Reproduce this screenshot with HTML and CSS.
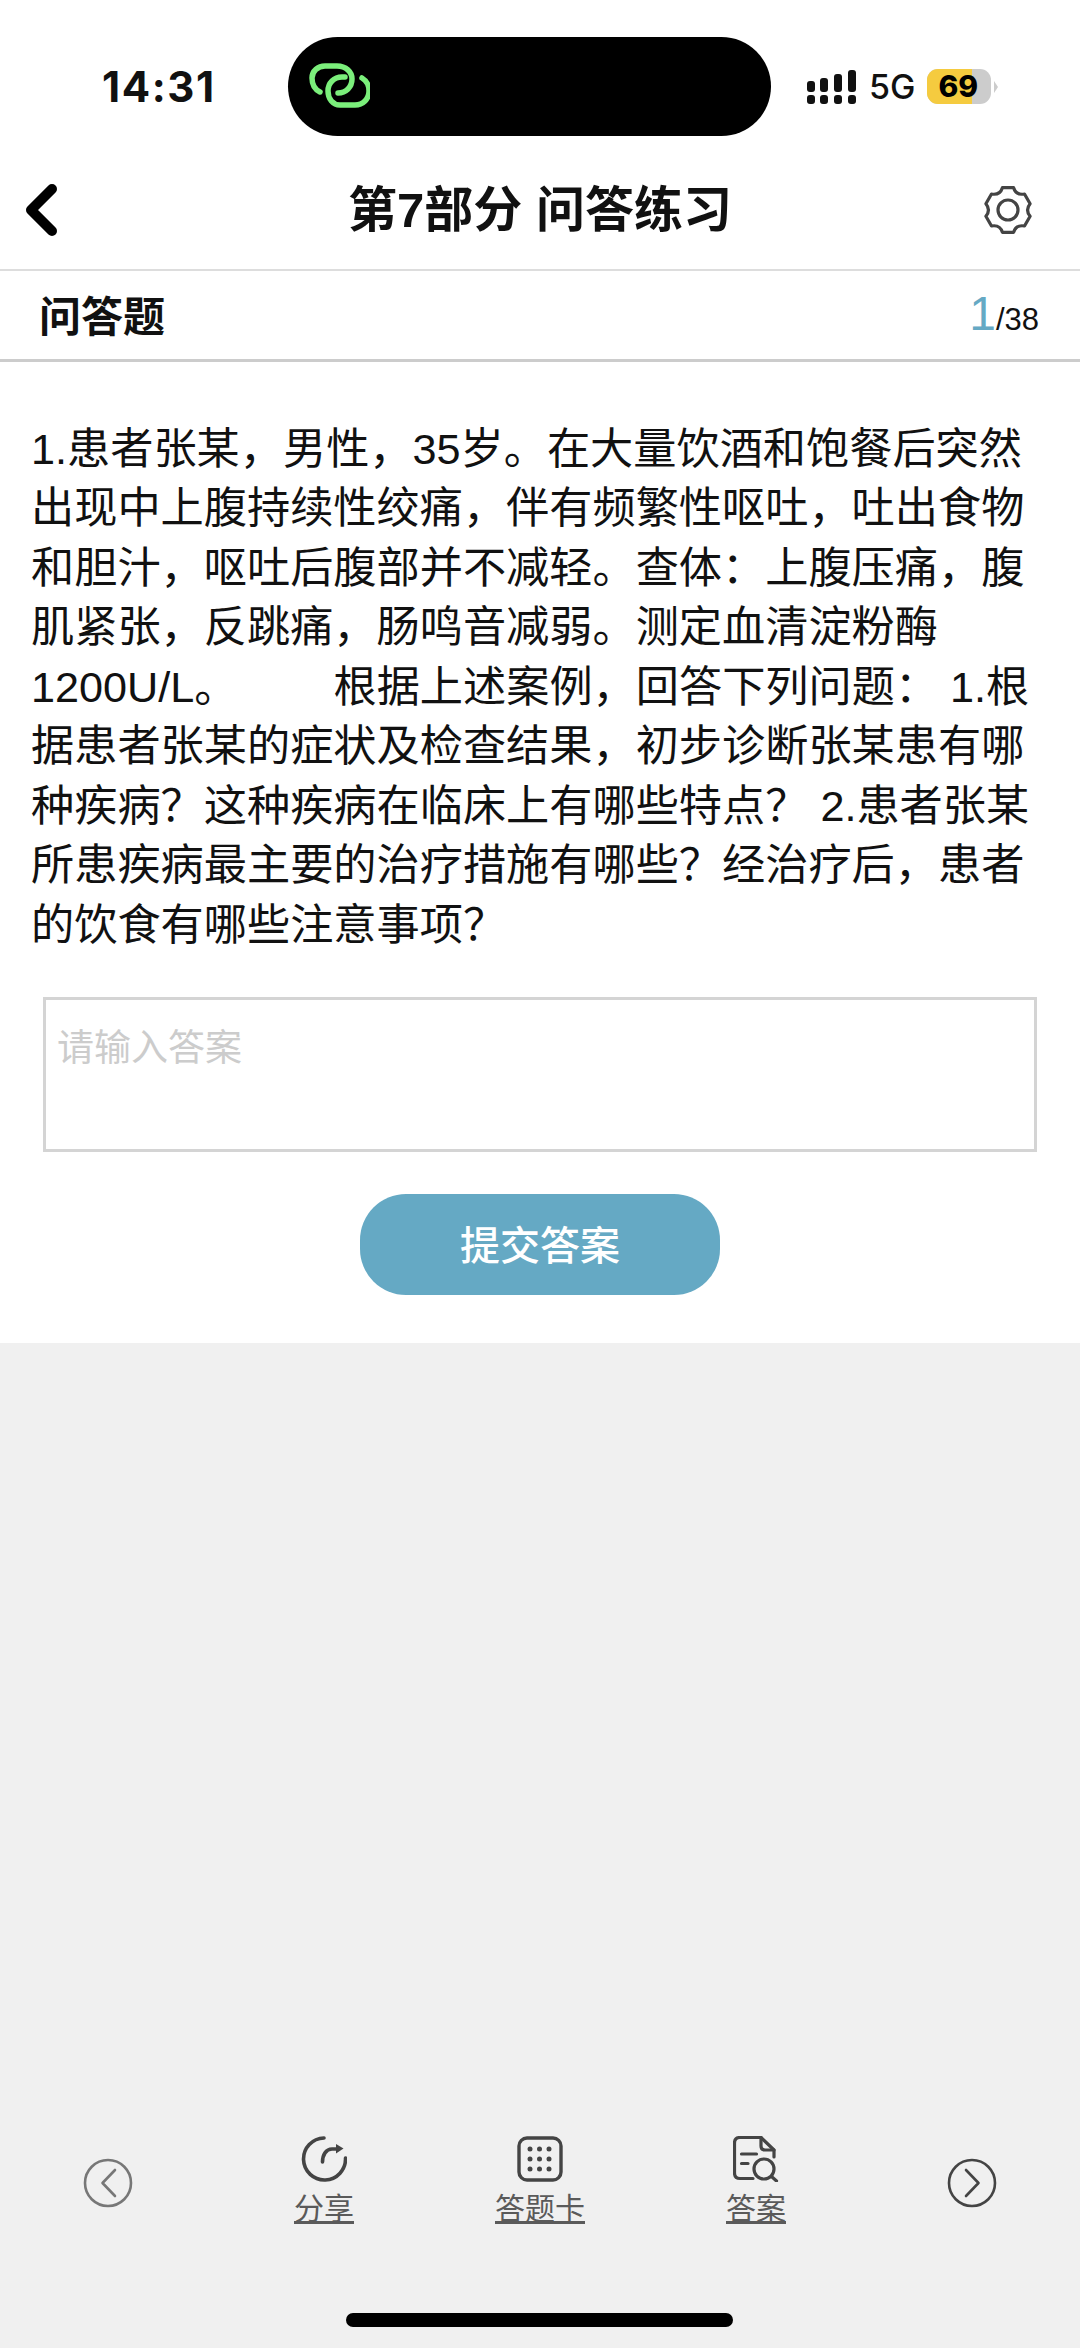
FILE: index.html
```html
<!DOCTYPE html>
<html lang="zh-CN">
<head>
    <meta charset="UTF-8">
    <title>第7部分 问答练习</title>
    <link rel="stylesheet" href="styles.css">
</head>
<body>
    <div class="page">
        <div class="status-bar">
            <div class="time">14:31</div>
            <div class="island">
                <svg class="island-icon" width="80" height="65" viewBox="0 0 80 65" fill="none" stroke="#7bef7b" stroke-width="5.5" stroke-linecap="round">
                    <path d="M30 38C24 35 22 29 22 24C22 17 28 12 35 12H47C56 12 62 18 62 25C62 33 56 39 48 39"/>
                    <path d="M72 24C77 27 79 32 79 37C79 45 73 51 65 51H50C43 51 38 45 38 37C38 29 44 23 52 23H55"/>
                </svg>
            </div>
            <svg class="signal" width="49" height="34" viewBox="0 0 49 34" fill="#111">
                <rect x="0" y="11" width="8" height="11" rx="3"/>
                <rect x="13" y="8" width="8" height="14" rx="3"/>
                <rect x="27" y="4" width="8" height="18" rx="3"/>
                <rect x="41" y="0" width="8" height="22" rx="3"/>
                <rect x="0" y="25" width="8" height="9" rx="3"/>
                <rect x="13" y="25" width="8" height="9" rx="3"/>
                <rect x="27" y="25" width="8" height="9" rx="3"/>
                <rect x="41" y="25" width="8" height="9" rx="3"/>
            </svg>
            <div class="network">5G</div>
            <div class="battery">
                <div class="battery-level">69</div>
            </div>
            <div class="battery-tip"></div>
        </div>

        <div class="nav">
            <svg class="nav-back" width="42" height="62" viewBox="0 0 42 62" fill="none" stroke="#000" stroke-width="10" stroke-linecap="round" stroke-linejoin="round">
                <path d="M31 10L10 31L31 52"/>
            </svg>
            <div class="nav-title">第7部分 问答练习</div>
            <svg class="nav-gear" width="54" height="54" viewBox="-27 -27 54 54" fill="none" stroke="#444" stroke-width="3.2" stroke-linejoin="round">
                <path d="M-5.6 -22.3L5.6 -22.3Q8 -14.5 16.5 -16L22.1 -6.3Q17 0 22.1 6.3L16.5 16Q8 14.5 5.6 22.3L-5.6 22.3Q-8 14.5 -16.5 16L-22.1 6.3Q-17 0 -22.1 -6.3L-16.5 -16Q-8 -14.5 -5.6 -22.3Z"/>
                <circle r="10"/>
            </svg>
        </div>

        <div class="sub-bar">
            <div class="sub-title">问答题</div>
            <div class="counter"><span class="counter-now">1</span>/38</div>
        </div>

        <div class="content">
            <p class="question">1.患者张某，男性，35岁。在大量饮酒和饱餐后突然出现中上腹持续性绞痛，伴有频繁性呕吐，吐出食物和胆汁，呕吐后腹部并不减轻。查体：上腹压痛，腹肌紧张，反跳痛，肠鸣音减弱。测定血清淀粉酶1200U/L。        根据上述案例，回答下列问题： 1.根据患者张某的症状及检查结果，初步诊断张某患有哪种疾病？这种疾病在临床上有哪些特点？ 2.患者张某所患疾病最主要的治疗措施有哪些？经治疗后，患者的饮食有哪些注意事项？</p>
            <textarea class="answer" placeholder="请输入答案"></textarea>
            <button class="submit">提交答案</button>
        </div>

        <div class="footer">
            <div class="toolbar">
                <div class="tool tool-arrow">
                    <svg width="50" height="50" viewBox="0 0 50 50" fill="none" stroke="#777" stroke-width="2.6" stroke-linecap="round" stroke-linejoin="round">
                        <circle cx="25" cy="25" r="23"/>
                        <path d="M32 12L19.5 25L32 38"/>
                    </svg>
                </div>
                <div class="tool">
                    <svg width="46" height="46" viewBox="0 0 46 46" fill="none" stroke="#444" stroke-width="3.6" stroke-linecap="round">
                        <path d="M23 2A21 21 0 1 0 44.5 22"/>
                        <path d="M21.5 26C21.5 19 25 13 31 13H37"/>
                        <path d="M35 8L42.5 12.5L35 17.5Z" fill="#444" stroke="none"/>
                    </svg>
                    <span class="tool-label">分享</span>
                </div>
                <div class="tool">
                    <svg width="46" height="46" viewBox="0 0 46 46" fill="#444">
                        <rect x="2" y="2" width="42" height="42" rx="8" fill="none" stroke="#444" stroke-width="3.4"/>
                        <circle cx="13" cy="13" r="2.5"/><circle cx="22.5" cy="13" r="2.5"/><circle cx="32" cy="13" r="2.5"/>
                        <circle cx="13" cy="23" r="2.5"/><circle cx="22.5" cy="23" r="2.5"/><circle cx="32" cy="23" r="2.5"/>
                        <circle cx="13" cy="33" r="2.5"/><circle cx="22.5" cy="33" r="2.5"/><circle cx="32" cy="33" r="2.5"/>
                    </svg>
                    <span class="tool-label">答题卡</span>
                </div>
                <div class="tool">
                    <svg width="46" height="46" viewBox="0 0 46 46" fill="none" stroke="#444" stroke-width="3.2" stroke-linecap="round" stroke-linejoin="round">
                        <path d="M20 42.5H7Q1.5 42.5 1.5 37V7Q1.5 1.5 7 1.5H28L41 14V21"/>
                        <path d="M28 1.5V10Q28 14 32 14H41"/>
                        <path d="M8.5 18H23.5M8.5 27.5H15"/>
                        <circle cx="31" cy="33" r="10"/>
                        <path d="M38.5 40.5L43.5 45"/>
                    </svg>
                    <span class="tool-label">答案</span>
                </div>
                <div class="tool tool-arrow">
                    <svg width="50" height="50" viewBox="0 0 50 50" fill="none" stroke="#444" stroke-width="2.6" stroke-linecap="round" stroke-linejoin="round">
                        <circle cx="25" cy="25" r="23"/>
                        <path d="M19 12L31.5 25L19 38"/>
                    </svg>
                </div>
            </div>
            <div class="home-bar"></div>
        </div>
    </div>
</body>
</html>
```

FILE: styles.css
```css
* {
    box-sizing: border-box;
}
body {
    margin: 0;
    background: #fff;
    color: #000;
    font-family: "Liberation Sans", "Noto Sans CJK SC", sans-serif;
}
.page {
    display: flex;
    flex-direction: column;
    width: 1080px;
    height: 2348px;
    overflow: hidden;
}

/* status bar */
.status-bar {
    display: flex;
    align-items: center;
    height: 136px;
    padding: 37px 0 0 102px;
}
.time {
    width: 186px;
    font-family: Inter, "Liberation Sans", sans-serif;
    font-size: 42px;
    font-weight: 700;
    letter-spacing: 1.6px;
    color: #111;
}
.island {
    display: flex;
    align-items: center;
    width: 483px;
    height: 99px;
    padding-left: 2px;
    background: #000;
    border-radius: 50px;
}
.signal {
    margin: 1px 0 0 36px;
}
.network {
    margin-left: 13px;
    font-family: Inter, "Liberation Sans", sans-serif;
    font-size: 34px;
    font-weight: 500;
    color: #111;
}
.battery {
    width: 64px;
    height: 35px;
    margin-left: 12px;
    background: #ccc;
    border-radius: 11px;
    overflow: hidden;
}
.battery-level {
    width: 45px;
    height: 35px;
    padding-left: 11px;
    background: #f5cb3f;
    font-family: Inter, "Liberation Sans", sans-serif;
    font-size: 30px;
    font-weight: 800;
    line-height: 35px;
    white-space: nowrap;
}
.battery-tip {
    width: 0;
    height: 0;
    margin-left: 3px;
    border-left: 4px solid #ccc;
    border-top: 6px solid transparent;
    border-bottom: 6px solid transparent;
}

/* nav */
.nav {
    display: grid;
    grid-template-columns: 1fr auto 1fr;
    align-items: center;
    height: 135px;
    padding: 14px 45px 0 21px;
    border-bottom: 2px solid #ddd;
}
.nav-title {
    margin-right: -24px;
    font-size: 49px;
    font-weight: 700;
    line-height: 60px;
    color: #111;
}
.nav-gear {
    justify-self: end;
}

.sub-bar {
    display: flex;
    align-items: center;
    justify-content: space-between;
    height: 91px;
    padding: 0 41px 3px 39px;
    border-bottom: 3px solid #ccc;
}
.sub-title {
    font-size: 42px;
    font-weight: 700;
    color: #111;
}
.counter {
    font-size: 31px;
    color: #111;
}
.counter-now {
    font-size: 48px;
    color: #65a9c4;
}

/* question */
.content {
    display: flex;
    flex-direction: column;
    align-items: center;
    height: 981px;
    padding-top: 57.5px;
}
.question {
    width: 100%;
    margin: 0;
    padding: 0 32px 0 31px;
    font-size: 43.2px;
    line-height: 59.5px;
    color: #111;
    white-space: pre-wrap;
}
.answer {
    display: block;
    width: 994px;
    height: 155px;
    margin-top: 42px;
    padding: 18px 11px;
    border: 3px solid #d4d4d4;
    border-radius: 0;
    outline: none;
    resize: none;
    font-family: "Liberation Sans", "Noto Sans CJK SC", sans-serif;
    font-size: 37px;
}
.answer::placeholder {
    color: #ccc;
}
.submit {
    width: 360px;
    height: 101px;
    margin-top: 42px;
    padding-bottom: 5px;
    border: none;
    border-radius: 46px;
    background: #65a9c4;
    color: #fff;
    font-family: "Liberation Sans", "Noto Sans CJK SC", sans-serif;
    font-size: 40px;
    font-weight: 500;
}

/* bottom tools */
.footer {
    flex: 1;
    display: flex;
    flex-direction: column;
    justify-content: flex-end;
    background: #f0f0f0;
}
.toolbar {
    display: grid;
    grid-template-columns: repeat(5, 216px);
    height: 90px;
    margin-bottom: 87px;
}
.tool {
    display: flex;
    flex-direction: column;
    align-items: center;
    gap: 9px;
}
.tool-arrow {
    justify-content: center;
    padding-top: 2px;
}
.tool-label {
    font-size: 30px;
    line-height: 36px;
    color: #5a5a5a;
    text-decoration: underline;
    text-underline-offset: 2px;
}
.home-bar {
    width: 387px;
    height: 14px;
    margin: 0 0 21px 346px;
    background: #000;
    border-radius: 7px;
}
```
